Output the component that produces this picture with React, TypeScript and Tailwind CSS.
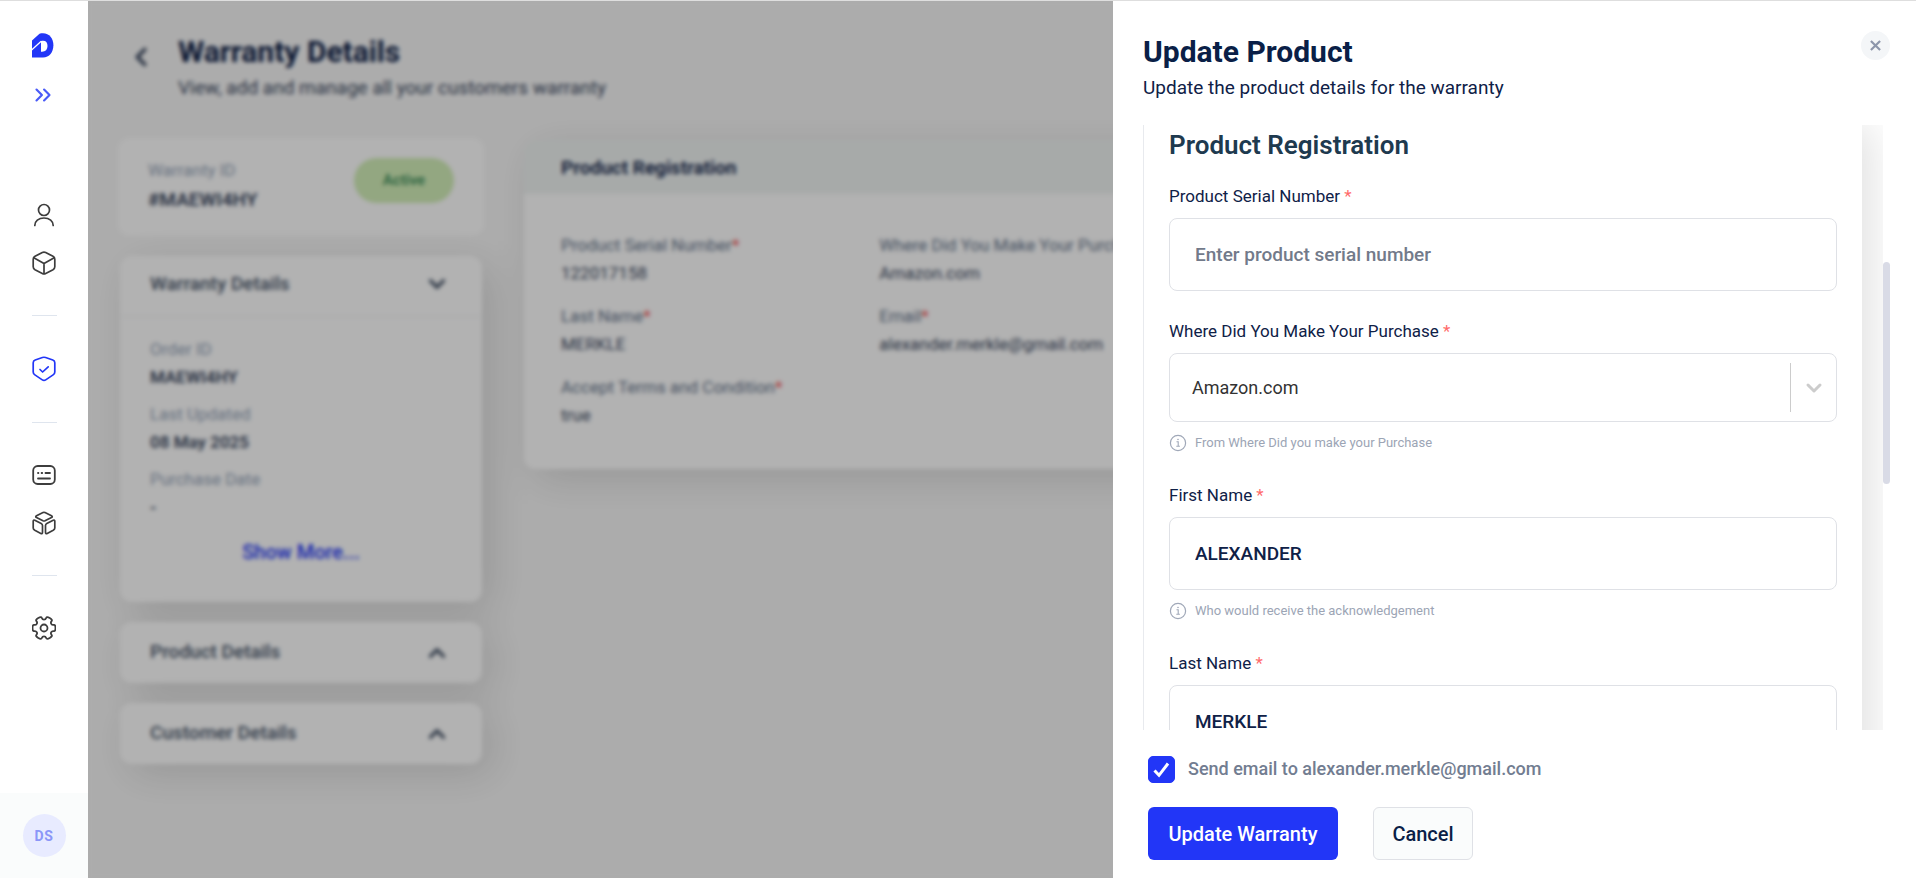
import { useState } from "react";
import { LuChevronDown, LuChevronLeft, LuChevronUp, LuChevronsRight } from "react-icons/lu";

const summaryItems = [
  { label: "Order ID", value: "MAEWI4HY" },
  { label: "Last Updated", value: "08 May 2025" },
  { label: "Purchase Date", value: "-" },
];

const registrationRows = [
  [
    { label: "Product Serial Number", value: "122017158" },
    { label: "Where Did You Make Your Purchase", value: "Amazon.com" },
  ],
  [
    { label: "Last Name", value: "MERKLE" },
    { label: "Email", value: "alexander.merkle@gmail.com" },
  ],
  [{ label: "Accept Terms and Condition", value: "true" }],
];

// Smooth six-tooth gear outline around (12, 12)
const gearPoints = [0, 60, 120, 180, 240, 300].flatMap((angle) =>
  [
    [angle - 17, 12],
    [angle + 17, 12],
    [angle + 19, 8.5],
    [angle + 41, 8.5],
  ].map(([deg, r]) => {
    const rad = (deg * Math.PI) / 180;
    return [12 + r * Math.cos(rad), 12 + r * Math.sin(rad)];
  })
);
const gearPath =
  gearPoints
    .map(([x, y], i) => {
      const [nx, ny] = gearPoints[(i + 1) % gearPoints.length];
      const [px, py] = gearPoints[(i + gearPoints.length - 1) % gearPoints.length];
      const start = i === 0 ? `M${(px + x) / 2} ${(py + y) / 2}` : "";
      return `${start}Q${x} ${y} ${(x + nx) / 2} ${(y + ny) / 2}`;
    })
    .join("") + "Z";

const Logo = () => (
  <svg className="mr-[3px]" width="22" height="25" viewBox="0 0 22 25" fill="none">
    <path d="M0 7.500 7.500.8C8 .5 8.500.3 9.200.3H11c6.300 0 10.400 5 10.400 12s-4.100 12.200-10.400 12.200H0v-17Z" fill="#2236f7" />
    <path d="M9 8c4-1.200 6.500.8 6.500 4.800 0 4.200-2.500 6.400-6.500 5.900V8Z" fill="#fff" />
    <path d="m-.5 17 9.700-8.800" stroke="#fff" strokeWidth="1.300" />
  </svg>
);

const UserIcon = () => (
  <svg width="24" height="24" viewBox="0 0 24 24" fill="none" stroke="currentColor" strokeWidth="1.700" strokeLinecap="round">
    <circle cx="12" cy="7" r="5.500" />
    <path d="M2.800 22.500c0-4.300 3.700-7.500 9.200-7.500s9.200 3.200 9.200 7.500" />
  </svg>
);

const BoxIcon = () => (
  <svg width="24" height="24" viewBox="0 0 24 24" fill="none" stroke="currentColor" strokeWidth="1.700" strokeLinejoin="round">
    <path d="M10.300 1.600 3 5.300C1.800 6 1.200 6.800 1.200 8.200v7.600c0 1.300.6 2.200 1.800 2.900l7.300 3.800c1.200.6 2.200.6 3.400 0l7.300-3.800c1.200-.7 1.800-1.600 1.800-2.900V8.200c0-1.400-.6-2.200-1.800-2.900l-7.300-3.700c-1.200-.6-2.200-.6-3.400 0Z" />
    <path d="M1.800 6.800 12 12.500l10.200-5.700M12 12.500V23" />
  </svg>
);

const ShieldIcon = () => (
  <svg width="24" height="26" viewBox="0 0 24 26" fill="none" stroke="currentColor" strokeWidth="1.700" strokeLinejoin="round" strokeLinecap="round">
    <path d="M10.400 1.500 3.200 4C1.800 4.500 1.200 5.300 1.200 6.700v9.200c0 1.400.5 2.200 1.700 3l7.400 5c1.200.8 2.200.8 3.400 0l7.400-5c1.200-.8 1.700-1.600 1.700-3V6.700c0-1.400-.6-2.200-2-2.700l-7.200-2.500c-1.200-.4-2-.4-3.200 0Z" />
    <path d="m8 13.500 2.600 2.500 5.600-5.200" />
  </svg>
);

const FormIcon = () => (
  <svg width="24" height="24" viewBox="0 0 24 24" fill="none" stroke="currentColor" strokeWidth="1.800" strokeLinecap="round">
    <rect x="1.200" y="3" width="21.600" height="18" rx="4.500" />
    <path d="M6 10h.4M9.600 10h.6M13.500 10H18M6 15.500h12" />
  </svg>
);

const BlocksIcon = () => (
  <svg width="24" height="24" viewBox="0 0 24 24" fill="none" stroke="currentColor" strokeWidth="1.700" strokeLinejoin="round">
    <path d="M11 1.500 4.500 4.800c-1 .5-1 1.200 0 1.700L11 9.800c.7.300 1.300.3 2 0l6.500-3.300c1-.5 1-1.200 0-1.700L13 1.500c-.7-.3-1.300-.3-2 0Z" />
    <path d="m2.800 9.200 6.400 3.200c.9.500 1.300 1 1.300 2v6.900c0 1.200-.6 1.700-1.700 1.100l-6-3.100c-1.100-.6-1.600-1.200-1.600-2.300v-6.700c0-1.200.6-1.600 1.600-1.100ZM21.200 9.200l-6.400 3.200c-.9.500-1.300 1-1.300 2v6.900c0 1.200.6 1.700 1.700 1.100l6-3.100c1.100-.6 1.600-1.200 1.600-2.300v-6.700c0-1.200-.6-1.600-1.600-1.100Z" />
  </svg>
);

const GearIcon = () => (
  <svg width="24" height="24" viewBox="0 0 24 24" fill="none" stroke="currentColor" strokeWidth="1.800" strokeLinejoin="round">
    <circle cx="12" cy="12" r="3.500" />
    <path d={gearPath} />
  </svg>
);

const InfoIcon = () => (
  <svg className="shrink-0" width="18" height="18" viewBox="0 0 18 18" fill="none" stroke="#a0a8b8">
    <circle cx="9" cy="9" r="7.600" strokeWidth="1.200" />
    <path d="M7.500 7.800H9.200V12M7.300 12.200h3.600" strokeWidth="1.100" />
    <circle cx="9" cy="5.400" r=".5" fill="#a0a8b8" strokeWidth=".6" />
  </svg>
);

const Required = () => <span className="text-[#ff6b6b]">*</span>;

const Hint = ({ text }: { text: string }) => (
  <p className="mt-[9px] flex items-center gap-2 text-[13px] leading-6 text-[#9ca5b5]">
    <InfoIcon />
    {text}
  </p>
);

const TextField = ({ id, label, value, placeholder, hint, onChange }: any) => (
  <div className="mb-7">
    <label htmlFor={id} className="mb-2.5 block text-[17px] leading-6 text-[#0f2147]">
      {label} <Required />
    </label>
    <input
      id={id}
      type="text"
      value={value}
      placeholder={placeholder}
      onChange={(e) => onChange(e.target.value)}
      className="block h-[73px] w-full rounded-lg border border-[#dfe1e6] bg-white px-[25px] text-[19px] font-medium text-[#0f2147] outline-none placeholder:text-[#727a8a]"
    />
    {hint && <Hint text={hint} />}
  </div>
);

const Sidebar = () => (
  <aside className="flex w-[88px] shrink-0 flex-col items-center bg-white text-[#3d3d3d]">
    <nav className="flex flex-1 flex-col items-center pt-8">
      <a href="#" aria-label="Home"><Logo /></a>
      <button type="button" aria-label="Expand menu" className="mt-6 mr-[3px] text-[#4a5bf7]">
        <LuChevronsRight size={26} />
      </button>
      <a href="#" aria-label="Customers" className="mt-[95px]"><UserIcon /></a>
      <a href="#" aria-label="Products" className="mt-6"><BoxIcon /></a>
      <hr className="mt-10 w-[25px] border-[#dfe5ee]" />
      <a href="#" aria-label="Warranty" className="mt-10 text-[#2236f7]"><ShieldIcon /></a>
      <hr className="mt-10 w-[25px] border-[#dfe5ee]" />
      <a href="#" aria-label="Forms" className="mt-10"><FormIcon /></a>
      <a href="#" aria-label="Catalogue" className="mt-6"><BlocksIcon /></a>
      <hr className="mt-10 w-[25px] border-[#dfe5ee]" />
      <a href="#" aria-label="Settings" className="mt-10"><GearIcon /></a>
    </nav>
    <div className="flex h-[85px] w-full items-center justify-center bg-[#fafcfc]">
      <button type="button" className="h-[43px] w-[43px] rounded-full bg-[#e8ebff] text-sm font-bold tracking-wider text-[#8b96f8]">
        DS
      </button>
    </div>
  </aside>
);

const CollapsedCard = ({ title }: { title: string }) => (
  <section className="mx-0.5 flex h-[61px] items-center justify-between rounded-xl bg-white pr-8 pl-[30px] text-[#475569] shadow-[10px_10px_40px_rgba(0,0,0,0.12)]">
    <h2 className="text-[19px] font-medium">{title}</h2>
    <LuChevronUp size={26} strokeWidth={3} />
  </section>
);

const WarrantyPage = () => (
  <div className="h-full overflow-hidden bg-[#f7f7f7] px-[30px] pt-[33px] text-[#3b4860]">
    <header className="flex items-start gap-6">
      <button type="button" aria-label="Back" className="mt-2 ml-2">
        <LuChevronLeft size={30} strokeWidth={3} />
      </button>
      <div className="-ml-0.5">
        <h1 className="text-[30px] leading-9 font-bold text-[#0f2147]">Warranty Details</h1>
        <p className="mt-1 text-[19px] leading-7">View, add and manage all your customers warranty</p>
      </div>
    </header>

    <div className="mt-9 flex items-start gap-10">
      <div className="flex w-[366px] shrink-0 flex-col gap-5">
        <section className="flex h-[98px] items-start justify-between rounded-xl bg-white px-[30px] pt-5">
          <div>
            <p className="text-[17px] leading-6 text-[#94a3b8]">Warranty ID</p>
            <p className="mt-1 text-[19px] leading-7 font-semibold">#MAEWI4HY</p>
          </div>
          <span className="flex h-[45px] w-[100px] items-center justify-center rounded-full bg-[#d3efb9] text-[15px] font-semibold text-[#3f8f5c]">
            Active
          </span>
        </section>

        <section className="mx-0.5 rounded-xl bg-white shadow-[10px_10px_40px_rgba(0,0,0,0.12)]">
          <div className="flex h-[61px] items-center justify-between border-b border-[#eef0f2] pr-8 pb-1 pl-[30px] text-[#475569]">
            <h2 className="text-[19px] font-medium">Warranty Details</h2>
            <LuChevronDown size={26} strokeWidth={3} />
          </div>
          <div className="px-[30px] pt-[18px] pb-9">
            {summaryItems.map((item) => (
              <div key={item.label} className="mb-[9px]">
                <p className="text-[17px] leading-7 text-[#94a3b8]">{item.label}</p>
                <p className="text-[17px] leading-7 font-semibold">{item.value}</p>
              </div>
            ))}
            <button type="button" className="mt-2 w-full text-xl leading-7 font-medium text-[#2236f7]">
              Show More...
            </button>
          </div>
        </section>

        <CollapsedCard title="Product Details" />
        <CollapsedCard title="Customer Details" />
      </div>

      <section className="mt-0.5 flex-1 overflow-hidden rounded-xl bg-white shadow-[10px_10px_40px_rgba(0,0,0,0.12)]">
        <h2 className="bg-[#f0f4f3] px-[37px] pt-3.5 pb-3 text-[19px] leading-7 font-semibold text-[#0f2147]">Product Registration</h2>
        <div className="flex flex-col gap-[15px] pt-[37px] pr-[52px] pb-10 pl-[37px]">
          {registrationRows.map((row, index) => (
            <div key={index} className="grid grid-cols-4">
              {row.map((item) => (
                <div key={item.label}>
                  <p className="text-[17px] leading-7 whitespace-nowrap text-[#64748b]">
                    {item.label}<span className="text-[#f04444]">*</span>
                  </p>
                  <p className="text-[17px] leading-7">{item.value}</p>
                </div>
              ))}
            </div>
          ))}
        </div>
      </section>
    </div>
  </div>
);

const UpdateProductDrawer = () => {
  const [serial, setSerial] = useState("");
  const [purchase, setPurchase] = useState("Amazon.com");
  const [firstName, setFirstName] = useState("ALEXANDER");
  const [lastName, setLastName] = useState("MERKLE");
  const [sendEmail, setSendEmail] = useState(true);

  return (
    <form
      onSubmit={(e) => e.preventDefault()}
      className="absolute inset-y-0 right-0 flex w-[803px] max-w-full flex-col bg-white pr-[26px] pb-[18px] pl-[30px]"
    >
      <header className="flex h-[124px] shrink-0 items-start justify-between pt-[30px]">
        <div>
          <h1 className="pt-px text-[30px] leading-10 font-bold text-[#0a1f47]">Update Product</h1>
          <p className="text-[19px] leading-8 text-[#0f2147]">Update the product details for the warranty</p>
        </div>
        <button type="button" aria-label="Close" className="flex h-[29px] w-[29px] items-center justify-center rounded-full bg-[#f4f6f8]">
          <svg width="11" height="11" viewBox="0 0 12 12" stroke="#8d96ab" strokeWidth="2.400">
            <path d="m1 1 10 10M11 1 1 11" />
          </svg>
        </button>
      </header>

      <div className="flex min-h-0 flex-1">
        <div className="min-w-0 flex-1 overflow-hidden pr-[21px]">
          <div className="border-l border-[#e8eaee] px-[25px] pt-1 pb-10 shadow-[10px_0_40px_rgba(0,0,0,0.12)]">
            <h2 className="mb-[23px] text-[26px] leading-8 font-semibold text-[#1e3a4f]">Product Registration</h2>
            <TextField id="serial" label="Product Serial Number" value={serial} onChange={setSerial} placeholder="Enter product serial number" />
            <div className="mb-7">
              <label htmlFor="purchase" className="mb-2.5 block text-[17px] leading-6 text-[#0f2147]">
                Where Did You Make Your Purchase <Required />
              </label>
              <div className="relative">
                <select
                  id="purchase"
                  value={purchase}
                  onChange={(e) => setPurchase(e.target.value)}
                  className="block h-[69px] w-full appearance-none rounded-lg border border-[#dfe1e6] bg-white px-[22px] text-lg text-[#333] outline-none"
                >
                  <option>Amazon.com</option>
                </select>
                <span className="pointer-events-none absolute inset-y-2.5 right-0 flex w-[47px] items-center justify-center border-l border-[#ccc] text-[#ccc]">
                  <LuChevronDown size={24} strokeWidth={3} />
                </span>
              </div>
              <Hint text="From Where Did you make your Purchase" />
            </div>
            <TextField id="first" label="First Name" value={firstName} onChange={setFirstName} hint="Who would receive the acknowledgement" />
            <TextField id="last" label="Last Name" value={lastName} onChange={setLastName} />
          </div>
        </div>
        <div className="w-[7px] shrink-0 pt-[137px]">
          <div className="h-[222px] rounded-sm bg-[#d9dbe6]" />
        </div>
      </div>

      <footer className="shrink-0 pt-[25px] pl-[5px]">
        <label className="flex items-center gap-[13px] text-lg leading-7 font-medium text-[#727d91]">
          <span className="relative flex">
            <input
              type="checkbox"
              checked={sendEmail}
              onChange={(e) => setSendEmail(e.target.checked)}
              className="h-[27px] w-[27px] appearance-none rounded-[5px] border border-[#2236f7] checked:bg-[#2236f7]"
            />
            {sendEmail && (
              <svg className="pointer-events-none absolute inset-0" width="27" height="27" viewBox="0 0 27 27" fill="none" stroke="#fff" strokeWidth="3">
                <path d="m6.500 14.500 4.500 4.800 9-11.800" />
              </svg>
            )}
          </span>
          Send email to alexander.merkle@gmail.com
        </label>
        <div className="mt-6 flex gap-[35px]">
          <button type="submit" className="h-[53px] w-[190px] rounded-md bg-[#2236f7] text-xl font-medium text-white">
            Update Warranty
          </button>
          <button type="button" className="h-[53px] w-[100px] rounded-md border border-[#dfe1e6] bg-[#fafcfc] text-xl font-medium text-[#0a1f47]">
            Cancel
          </button>
        </div>
      </footer>
    </form>
  );
};

const App = () => {
  return (
    <div className="relative flex h-screen overflow-hidden border-t border-[#dedede] font-['Roboto',sans-serif]">
      <Sidebar />
      <main className="relative min-w-0 flex-1">
        <WarrantyPage />
        <div className="absolute inset-0 bg-black/30 backdrop-blur-[2px]" />
      </main>
      <UpdateProductDrawer />
    </div>
  );
};

export default App;
